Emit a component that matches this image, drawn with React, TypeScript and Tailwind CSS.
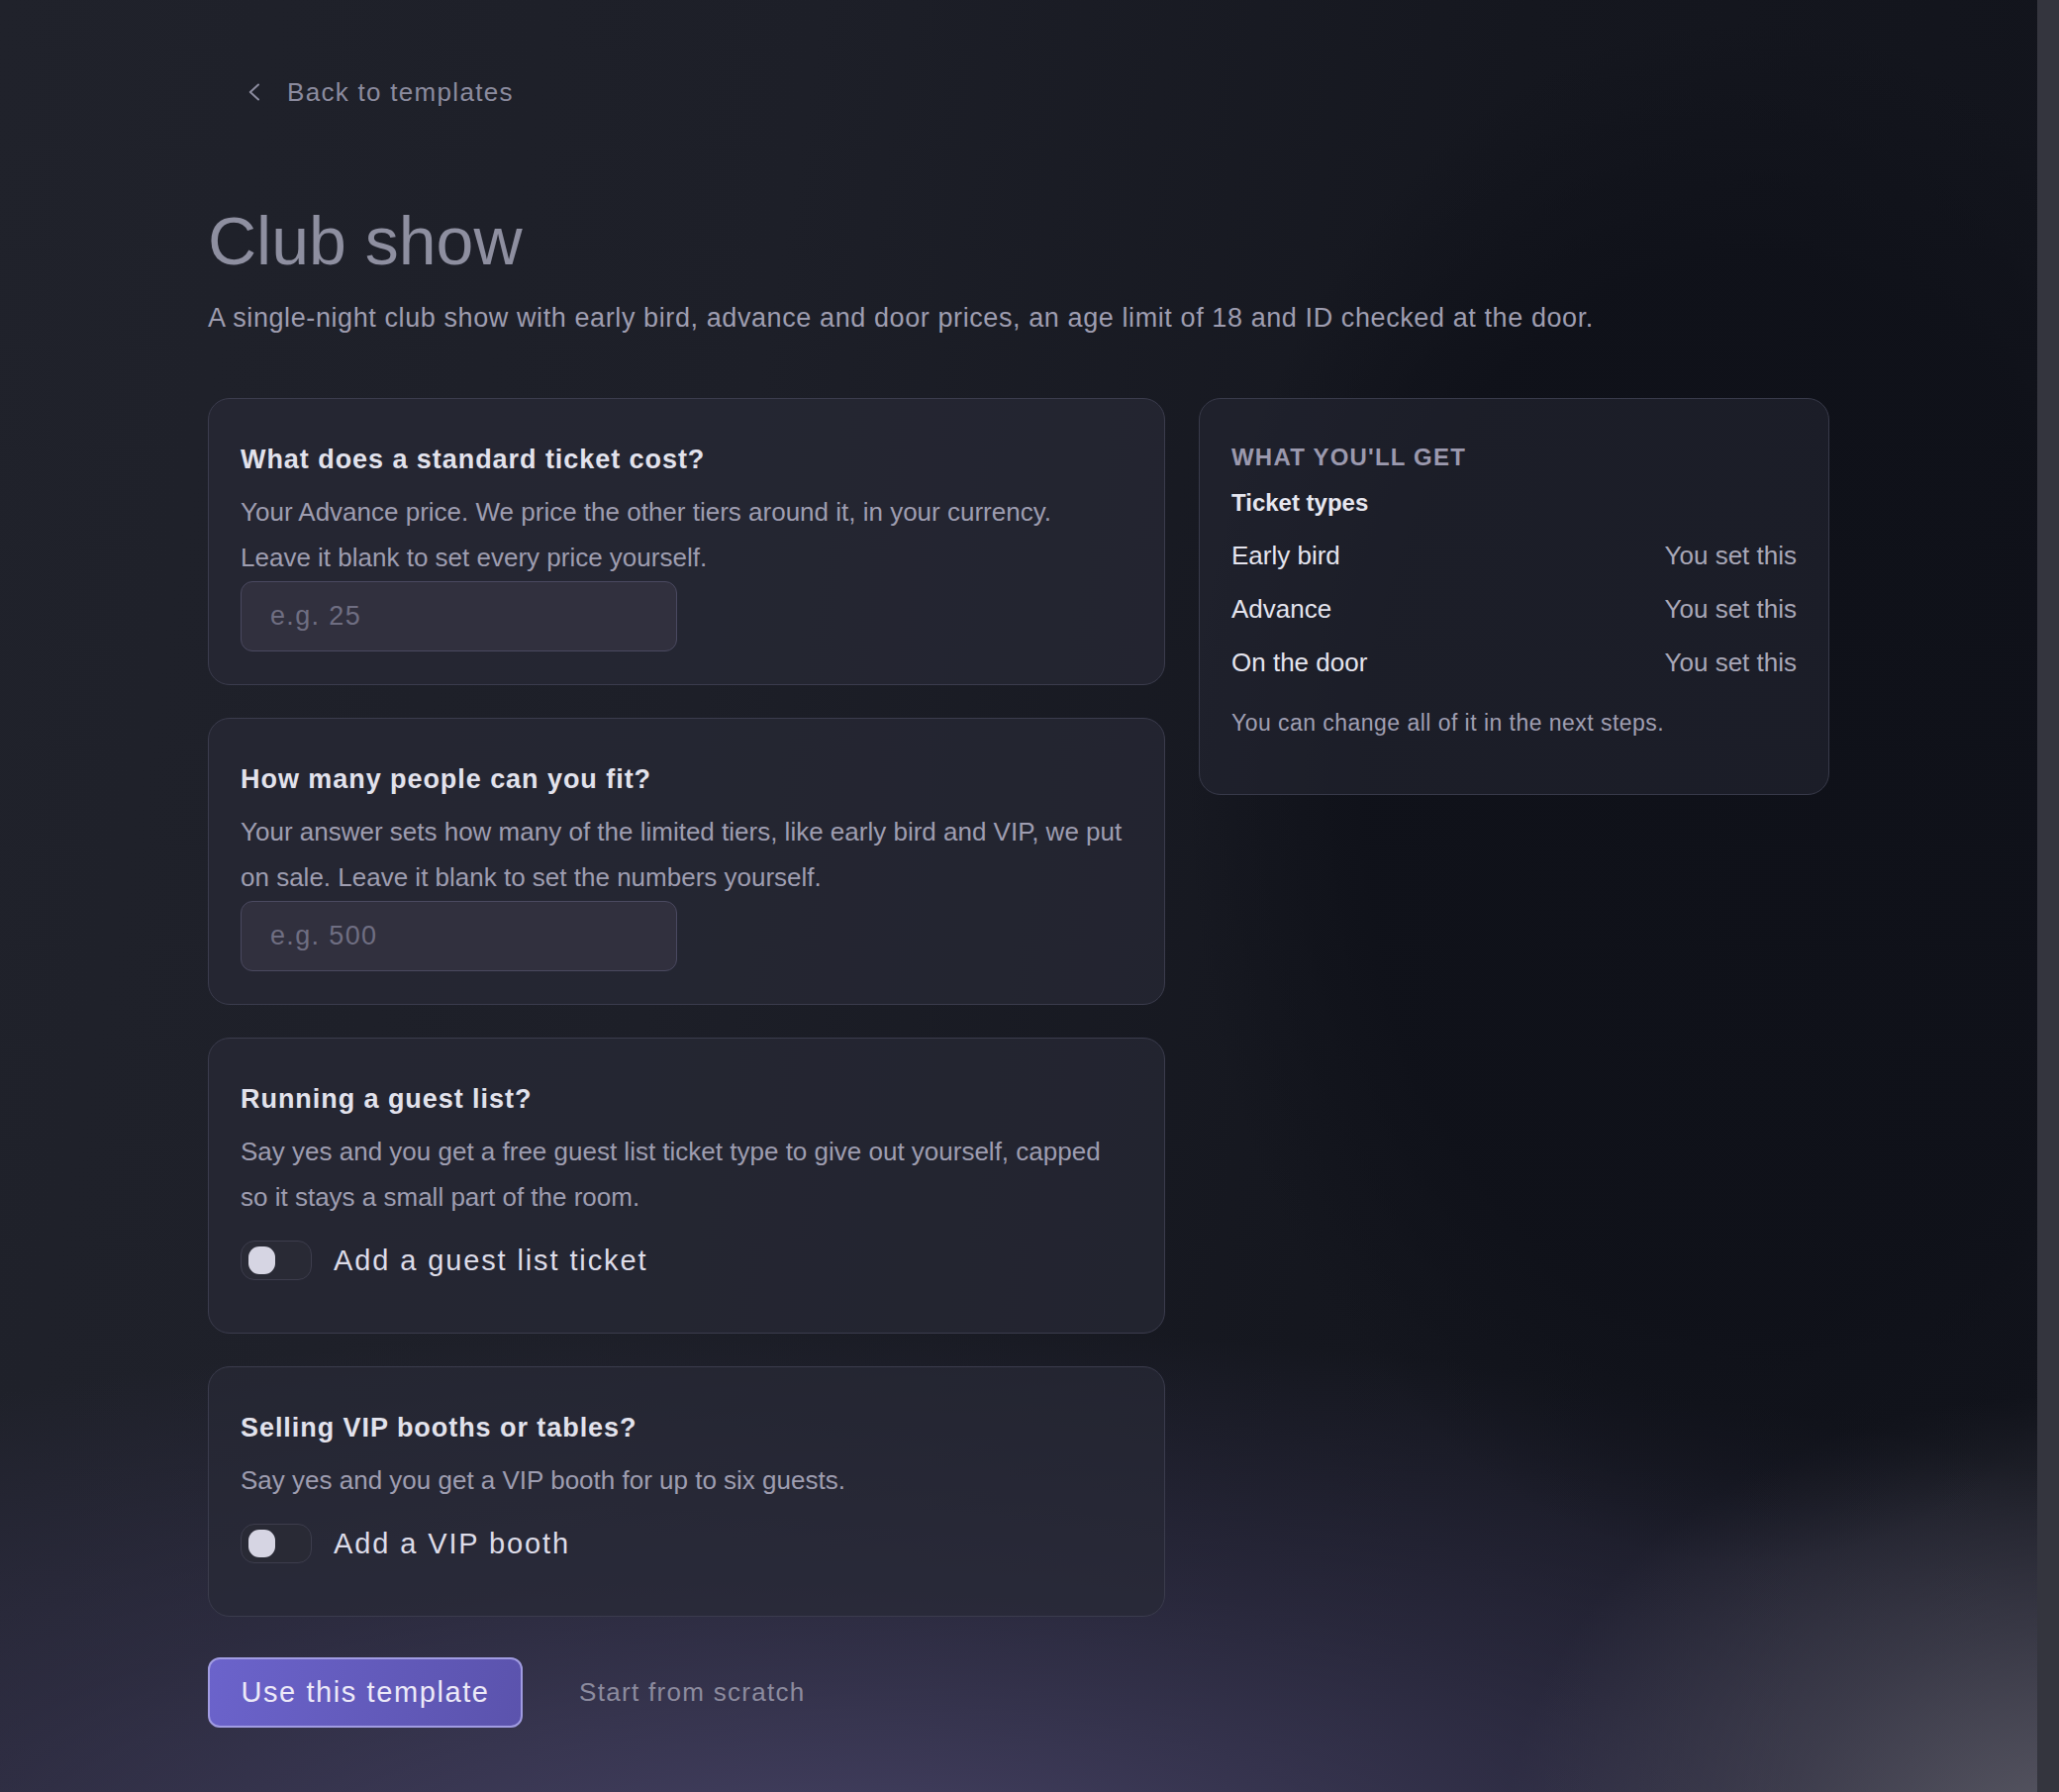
import React from "react";

function Toggle({ label }: { label: string }) {
  return (
    <div className="flex h-[81px] items-center gap-[22px]">
      <span className="flex h-[40px] w-[72px] items-center rounded-[14px] border border-[#3d3d4d] bg-[#292a35] pl-[7px]">
        <span className="h-[28px] w-[27px] rounded-[11px] bg-[#d6d5e3]" />
      </span>
      <span className="text-[29px] leading-[36px] tracking-[0.065em] text-[#dddce8]">{label}</span>
    </div>
  );
}

function Card({ title, desc, children }: { title: string; desc: React.ReactNode; children: React.ReactNode }) {
  return (
    <section className="rounded-[22px] border border-[#3b3c4d] bg-[rgba(40,42,54,0.7)] px-[32px] pt-[44px] pb-[33px]">
      <h2 className="text-[27px] font-bold leading-[34px] tracking-[0.035em] text-[#e2e2ec]">{title}</h2>
      <p className="mt-[13px] text-[26px] leading-[46px] text-[#9e9db0]">{desc}</p>
      {children}
    </section>
  );
}

function NumberInput({ placeholder }: { placeholder: string }) {
  return (
    <input
      type="text"
      placeholder={placeholder}
      className="mt-px block h-[71px] w-[441px] rounded-[12px] border border-[#4a4960] bg-[#31303e] px-[29px] text-[27px] tracking-[0.05em] text-[#e2e2ec] outline-none placeholder:text-[#6f6e82]"
    />
  );
}

function Row({ name }: { name: string }) {
  return (
    <li className="flex justify-between text-[26px] leading-[54px]">
      <span className="text-[#e4e4ee]">{name}</span>
      <span className="text-[#a8a7b7]">You set this</span>
    </li>
  );
}

export default function App() {
  return (
    <div className="flex h-screen w-full overflow-hidden bg-[#12141c] font-['Liberation_Sans',Arial,sans-serif]">
      <main className="h-full flex-1 bg-[image:radial-gradient(ellipse_560px_780px_at_1760px_800px,rgba(15,17,25,0.95)_0%,rgba(15,17,25,0.88)_68%,rgba(15,17,25,0)_100%),radial-gradient(ellipse_560px_460px_at_2080px_1870px,rgba(100,99,110,0.85)_0%,rgba(84,83,96,0.5)_50%,rgba(60,60,75,0)_100%),radial-gradient(ellipse_1800px_560px_at_850px_1900px,rgba(72,68,104,0.95)_0%,rgba(56,53,82,0.55)_55%,rgba(40,40,60,0)_100%),linear-gradient(100deg,#20222b_0%,#1d1f28_35%,#15171f_65%,#11131b_100%)]">
        <div className="mx-auto w-[1638px] pt-[75px]">
          <button className="ml-[41px] flex h-[36px] items-center gap-[27px] text-[26px] leading-[36px] tracking-[0.05em] text-[#8b8b9e]">
            <svg width="12" height="18" viewBox="0 0 12 18" fill="none">
              <polyline points="10,1.5 1.8,9 10,16.5" stroke="currentColor" strokeWidth="2" strokeLinecap="round" strokeLinejoin="round" />
            </svg>
            <span>Back to templates</span>
          </button>

          <h1 className="mt-[94px] text-[68px] leading-[76px] text-[#8e8fa0]">Club show</h1>
          <p className="mt-[22px] text-[27px] leading-[36px] tracking-[0.022em] text-[#9e9db0]">
            A single-night club show with early bird, advance and door prices, an age limit of 18 and ID checked at the door.
          </p>

          <div className="mt-[63px] flex items-start gap-[34px]">
            <div className="flex w-[967px] flex-col gap-[33px]">
              <Card
                title="What does a standard ticket cost?"
                desc={
                  <>
                    Your Advance price. We price the other tiers around it, in your currency.
                    <br />
                    Leave it blank to set every price yourself.
                  </>
                }
              >
                <NumberInput placeholder="e.g. 25" />
              </Card>
              <Card
                title="How many people can you fit?"
                desc="Your answer sets how many of the limited tiers, like early bird and VIP, we put on sale. Leave it blank to set the numbers yourself."
              >
                <NumberInput placeholder="e.g. 500" />
              </Card>
              <Card
                title="Running a guest list?"
                desc="Say yes and you get a free guest list ticket type to give out yourself, capped so it stays a small part of the room."
              >
                <Toggle label="Add a guest list ticket" />
              </Card>
              <Card title="Selling VIP booths or tables?" desc="Say yes and you get a VIP booth for up to six guests.">
                <Toggle label="Add a VIP booth" />
              </Card>
            </div>

            <aside className="w-[637px] rounded-[22px] border border-[#383a4a] bg-[rgba(38,40,52,0.55)] px-[32px] pt-[43px] pb-[56px]">
              <h3 className="text-[24px] font-bold leading-[32px] tracking-[0.05em] text-[#9b99ae]">WHAT YOU'LL GET</h3>
              <p className="mt-[14px] text-[24px] font-bold leading-[32px] text-[#e6e6ef]">Ticket types</p>
              <ul className="mt-[10px]">
                <Row name="Early bird" />
                <Row name="Advance" />
                <Row name="On the door" />
              </ul>
              <p className="mt-[18px] text-[23px] leading-[32px] tracking-[0.02em] text-[#a09fb2]">
                You can change all of it in the next steps.
              </p>
            </aside>
          </div>

          <div className="mt-[41px] flex items-center">
            <button className="flex h-[71px] w-[318px] items-center justify-center rounded-[12px] border-2 border-[#a19ce2] bg-[linear-gradient(100deg,#6b63cb,#5b53ad)] text-[29px] tracking-[0.055em] text-[#ece9f8]">
              Use this template
            </button>
            <button className="ml-[57px] text-[26px] tracking-[0.05em] text-[#8c8b9e]">Start from scratch</button>
          </div>
        </div>
      </main>
      <div className="h-full w-[22px] bg-[#34353e]" />
    </div>
  );
}
